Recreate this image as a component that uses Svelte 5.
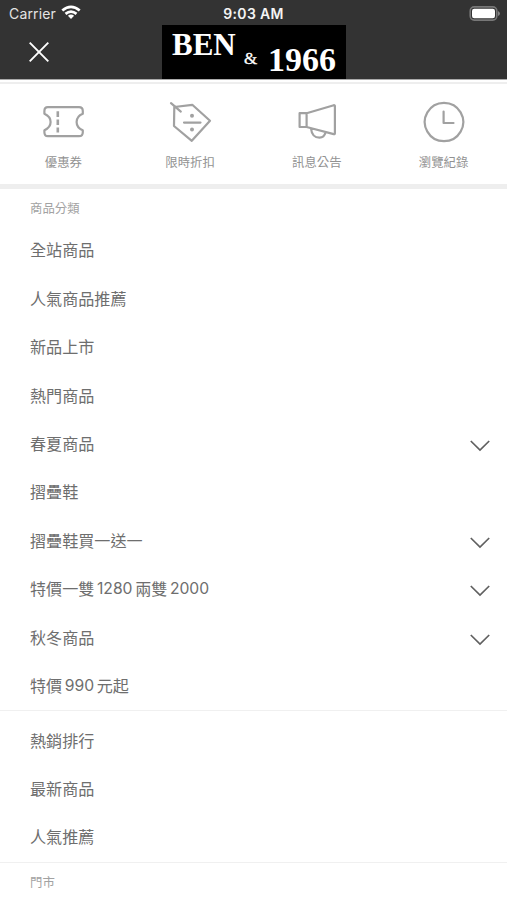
<script>
  const categories = [
    { parts: ['全站商品'] },
    { parts: ['人氣商品推薦'] },
    { parts: ['新品上市'] },
    { parts: ['熱門商品'] },
    { parts: ['春夏商品'], open: true },
    { parts: ['摺疊鞋'] },
    { parts: ['摺疊鞋買一送一'], open: true },
    { parts: ['特價一雙', '1280', '兩雙', '2000'], open: true },
    { parts: ['秋冬商品'], open: true },
    { parts: ['特價', '990', '元起'] }
  ];
  const rankings = [{ parts: ['熱銷排行'] }, { parts: ['最新商品'] }, { parts: ['人氣推薦'] }];
</script>

{#snippet row(item)}
  <li>
    <span class="name">{#each item.parts as part}<span class:num={/^\d+$/.test(part)}>{part}</span>{/each}</span>
    {#if item.open}
      <svg class="chevron" width="22" height="14" viewBox="0 0 22 14"><path d="M1.8 2 11 11 20.2 2" /></svg>
    {/if}
  </li>
{/snippet}

<div class="screen">
  <header>
    <div class="status">
      <div class="carrier">
        <span>Carrier</span>
        <svg width="20" height="15" viewBox="0 0 20 15" fill="none" stroke="#fff" stroke-width="2.7">
          <path d="M1.3 5.6Q10-2 18.7 5.6M4.5 8.9Q10 4.2 15.5 8.9" />
          <path d="M6.9 10.7Q10 8.2 13.1 10.7L10 14Z" fill="#fff" stroke="none" />
        </svg>
      </div>
      <span class="time">9:03 AM</span>
      <svg class="battery" width="32" height="16" viewBox="0 0 32 16">
        <rect x="1.2" y=".9" width="26.6" height="13.2" rx="4" fill="none" stroke="#777" stroke-width="1.6" />
        <rect x="3" y="2.7" width="23" height="9.6" rx="2.2" fill="#fff" />
        <path d="M29 5Q31 6 31 7.5T29 10Z" fill="#858585" />
      </svg>
    </div>
    <div class="bar">
      <svg class="close" width="22" height="22" viewBox="0 0 22 22"><path d="M1.7 1.7 20.3 20.3M20.3 1.7 1.7 20.3" /></svg>
      <div class="logo"><b class="ben">BEN</b><span class="amp">&amp;</span><b class="year">1966</b></div>
    </div>
  </header>

  <nav>
    <a>
      <svg width="44" height="44" viewBox="0 0 44 44">
        <path d="M6.8 7.2H38Q41.8 7.2 41.8 11V13.7Q35.6 16.2 35.6 22T41.8 30.2V32.2Q41.8 36.2 38 36.2H6.8Q3.4 36.2 3.4 32.2V30.2Q9.6 27.5 9.6 22T3.4 13.7V11Q3.4 7.2 6.8 7.2Z" />
        <path class="thick" d="M16.8 11.2V17M16.8 19.5V25M16.8 27.5V32.5" />
      </svg>
      <span>優惠券</span>
    </a>
    <a>
      <svg width="44" height="44" viewBox="0 0 44 44">
        <path d="M6.3 7 24.3 4.8 42 20.7 23.8 40.8 6 26ZM3 3.2 12.8 11.6M16 22.6H32.5" />
        <circle cx="24" cy="15.8" r="2" /><circle cx="24" cy="29.4" r="2" />
      </svg>
      <span>限時折扣</span>
    </a>
    <a>
      <svg width="44" height="44" viewBox="0 0 44 44">
        <path d="M4.6 13.2H11.6L38.8 5.2Q39.9 5 39.9 6V33.2Q39.9 34.5 38.7 34.1L11.6 27H4.6ZM11.6 13.2V27M16 28.5Q17 37.7 24.5 37.7 29.2 37.7 30.5 32.6" />
      </svg>
      <span>訊息公告</span>
    </a>
    <a>
      <svg width="44" height="44" viewBox="0 0 44 44">
        <path d="M22 2.8A19.2 19.2 0 1 1 21.99 2.8ZM21.6 11.5V23H31.5" />
      </svg>
      <span>瀏覽紀錄</span>
    </a>
  </nav>

  <h2>商品分類</h2>
  <ul>{#each categories as item}{@render row(item)}{/each}</ul>
  <ul class="ranked">{#each rankings as item}{@render row(item)}{/each}</ul>
  <h2 class="store">門市</h2>
</div>

<style>
  :global(body) { margin: 0; background: #fff; }
  .screen {
    width: 507px;
    height: 900px;
    overflow: hidden;
    background: #fff;
    font-family: Inter, "Noto Sans CJK TC", sans-serif;
  }
  header { height: 80px; background: #333; border-bottom: 1px solid #aaa; box-sizing: border-box; }
  .status {
    display: grid;
    grid-template-columns: 1fr auto 1fr;
    align-items: center;
    height: 25px;
    padding: 0 6px 0 9px;
    color: #fff;
    font-size: 14px;
  }
  .carrier { display: flex; align-items: center; gap: 5px; padding-top: 2px; color: #e4e4e4; letter-spacing: .15px; }
  .carrier svg { margin-top: -2px; }
  .time { padding-top: 2px; margin-left: -3px; font-weight: 600; font-size: 14px; letter-spacing: .3px; color: #f4f4f4; }
  .battery { justify-self: end; margin-top: 2px; }
  .bar { display: flex; align-items: center; height: 54px; padding-left: 28px; }
  .close { fill: none; stroke: #fff; stroke-width: 1.9; }
  .logo {
    display: flex;
    align-items: flex-start;
    width: 184px;
    height: 54px;
    margin-left: 112px;
    background: #000;
    color: #fff;
    font-family: "Liberation Serif", serif;
    line-height: 1;
  }
  .ben { margin: 4px 0 0 10px; font-size: 31px; width: 64px; }
  .amp { margin: 25px 0 0 8px; font-size: 17px; width: 15px; -webkit-text-stroke: .3px #fff; }
  .year { margin: 18px 0 0 9px; font-size: 34px; }

  nav {
    display: grid;
    grid-template-columns: repeat(4, 1fr);
    height: 100px;
    margin-top: 2px;
    border-top: 2px solid #eee;
    border-bottom: 5px solid #eee;
  }
  nav a { display: flex; flex-direction: column; align-items: center; padding-top: 16px; }
  nav svg { fill: none; stroke: #a1a1a1; stroke-width: 2.2; stroke-linejoin: round; stroke-linecap: round; }
  nav .thick { stroke-width: 2.6; stroke-linecap: butt; }
  nav circle { fill: #a1a1a1; stroke: none; }
  nav span { margin-top: 10px; color: #929292; font-size: 12.4px; line-height: 18px; }
  h2 { margin: 0; padding-left: 30px; height: 37px; line-height: 39px; color: #a2a2a2; font-size: 12.4px; font-weight: 400; }
  ul { margin: 0; padding: 0 0 0 30px; list-style: none; }
  li { display: flex; align-items: center; justify-content: space-between; height: 48.45px; padding-right: 16px; }
  .name { display: flex; color: #6e6e6e; font-size: 16.1px; line-height: 24px; }
  .num { margin: 0 2.6px; font-size: 15.7px; }
  .chevron { fill: none; stroke: #606060; stroke-width: 1.7; margin-top: 4px; }
  .ranked, .store { margin-left: 0; }
  .ranked { border-top: 1px solid #f0f0f0; border-bottom: 1px solid #f0f0f0; padding-top: 5px; }
</style>
